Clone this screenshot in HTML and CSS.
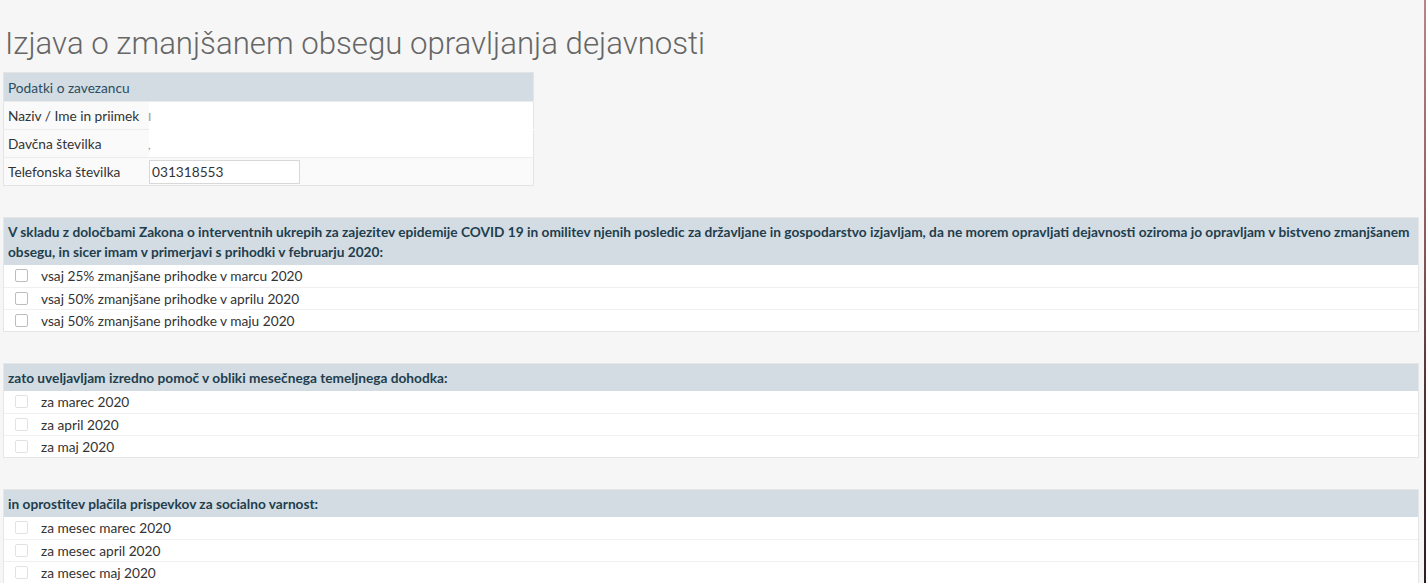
FILE: index.html
```html
<!DOCTYPE html>
<html lang="sl">
<head>
<meta charset="utf-8">
<title>Izjava</title>
<link rel="stylesheet" href="styles.css">
</head>
<body>
<div class="page">
  <main class="main">
    <h1 class="title">Izjava o zmanjšanem obsegu opravljanja dejavnosti</h1>

    <table class="info">
      <thead>
        <tr><th colspan="2">Podatki o zavezancu</th></tr>
      </thead>
      <tbody>
        <tr><td class="lbl">Naziv / Ime in priimek</td><td class="val blank"><span class="stub">I</span></td></tr>
        <tr><td class="lbl">Davčna številka</td><td class="val blank"><span class="stub dot">,</span></td></tr>
        <tr><td class="lbl">Telefonska številka</td><td class="val"><input class="phone" type="text" value="031318553"></td></tr>
      </tbody>
    </table>

    <section class="box first">
      <div class="box-head">V skladu z določbami Zakona o interventnih ukrepih za zajezitev epidemije COVID 19 in omilitev njenih posledic za državljane in gospodarstvo izjavljam, da ne morem opravljati dejavnosti oziroma jo opravljam v bistveno zmanjšanem obsegu, in sicer imam v primerjavi s prihodki v februarju 2020:</div>
      <label class="row"><span class="cb"></span><span>vsaj 25% zmanjšane prihodke v marcu 2020</span></label>
      <label class="row"><span class="cb"></span><span>vsaj 50% zmanjšane prihodke v aprilu 2020</span></label>
      <label class="row"><span class="cb"></span><span>vsaj 50% zmanjšane prihodke v maju 2020</span></label>
    </section>

    <section class="box">
      <div class="box-head">zato uveljavljam izredno pomoč v obliki mesečnega temeljnega dohodka:</div>
      <label class="row"><span class="cb faint"></span><span>za marec 2020</span></label>
      <label class="row"><span class="cb faint"></span><span>za april 2020</span></label>
      <label class="row"><span class="cb faint"></span><span>za maj 2020</span></label>
    </section>

    <section class="box">
      <div class="box-head">in oprostitev plačila prispevkov za socialno varnost:</div>
      <label class="row"><span class="cb faint"></span><span>za mesec marec 2020</span></label>
      <label class="row"><span class="cb faint"></span><span>za mesec april 2020</span></label>
      <label class="row"><span class="cb faint"></span><span>za mesec maj 2020</span></label>
    </section>
  </main>
  <div class="edge"></div>
</div>
</body>
</html>
```
FILE: styles.css
```css
html, body {
  margin: 0;
  padding: 0;
  background: #f6f6f6;
  height: 100%;
  overflow: hidden;
}
body {
  font-family: Lato, "Open Sans", sans-serif;
  font-size: 13.7px;
  color: #333;
}
.page {
  display: flex;
  min-height: 583px;
}
.main {
  flex: 1;
  padding: 0 5px 0 3px;
  min-width: 0;
}
.edge {
  width: 2px;
  background: linear-gradient(#b48888, #8a5c5c 40%, #4a2e30 70%, #2c1e20);
}
.title {
  margin: 0 0 10px 0;
  padding: 26px 0 0 2px;
  font-family: Roboto, sans-serif;
  font-weight: 300;
  font-size: 31.2px;
  line-height: 36px;
  height: 36px;
  color: #666;
  white-space: nowrap;
}
.info {
  width: 531px;
  border-collapse: collapse;
  border: 1px solid #e4e4e4;
  background: #fafafa;
}
.info th {
  background: #d2dce2;
  color: #2b4d5f;
  font-weight: 400;
  text-align: left;
  height: 28px;
  padding: 0 4px;
  font-size: 13.7px;
}
.info td {
  height: 27px;
  padding: 0;
  border-top: 1px solid #ececec;
}
.info td.lbl {
  width: 141px;
  padding-left: 4px;
  white-space: nowrap;
  color: #333;
}
.info td.val.blank {
  background: #fff;
}
.info tbody tr:nth-child(2) td.val { border-top-color: #fff; }
.stub {
  color: #999;
  font-size: 12px;
  margin-left: -1px;
}
.phone {
  font-family: Lato, sans-serif;
  font-size: 13.7px;
  color: #333;
  width: 151px;
  height: 24px;
  box-sizing: border-box;
  border: 1px solid #d8d8d8;
  padding: 0 2px;
  margin: 0;
  background: #fff;
  display: block;
}
.box {
  margin-top: 31px;
  border: 1px solid #e6e6e6;
  background: #fff;
}
.box.first {
  margin-top: 31px;
}
.box-head {
  background: #d2dce2;
  color: #1f3e4e;
  font-weight: 700;
  font-size: 13.7px;
  line-height: 19.5px;
  padding: 4px 4px 3.5px;
}
.row {
  display: flex;
  align-items: center;
  height: 22px;
  border-top: 1px solid #f0f0f0;
  box-sizing: border-box;
  color: #333;
  font-size: 13.7px;
}
.box-head + .row { border-top: none; }
.cb {
  width: 11px;
  height: 11px;
  border: 1px solid #bdbdbd;
  border-radius: 2px;
  margin: 0 13px 0 11px;
  background: #fff;
  flex: none;
}
.cb.faint {
  border-color: #e2e2e2;
}
```
